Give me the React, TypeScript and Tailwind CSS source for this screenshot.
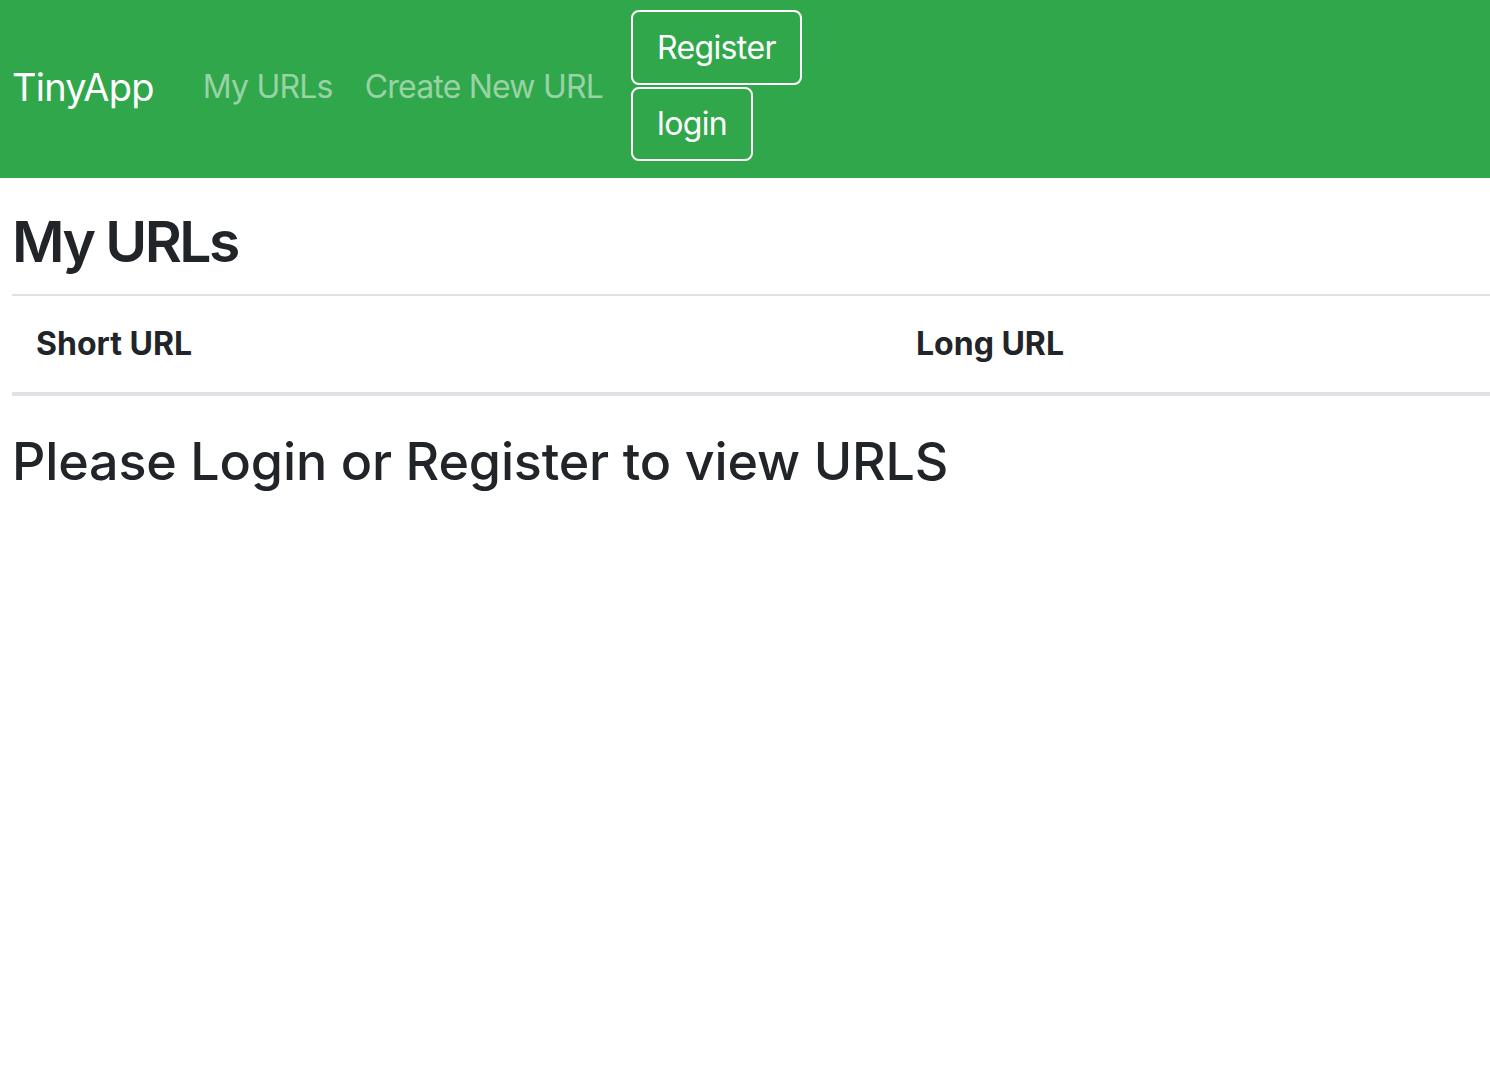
import React from 'react';

const font = { fontFamily: 'Inter, "Noto Sans", sans-serif' };

export default function App() {
  return (
    <div className="min-h-screen bg-white text-[#212529]" style={font}>
      {/* navbar */}
      <nav className="h-[178px] bg-[#31a74c] flex items-center px-[12px]">
        <a className="text-[38px] leading-[1.5] tracking-[-0.02em] text-white mr-[33px] -mt-[4px]">TinyApp</a>
        <div className="flex items-center -mt-[4px]">
          <a className="text-[32px] leading-[1.5] tracking-[-0.025em] text-white/50 px-[16px]">My URLs</a>
          <a className="text-[32px] leading-[1.5] tracking-[-0.025em] text-white/50 px-[16px]">Create New URL</a>
        </div>
        <div className="flex flex-col items-start gap-[2px] ml-[12px] -mt-[7px]">
          <button className="border-2 border-white rounded-[8px] px-[24px] h-[75px] text-[32px] tracking-[-0.02em] text-white">Register</button>
          <button className="border-2 border-white rounded-[8px] px-[24px] h-[74px] text-[32px] tracking-[-0.02em] text-white">login</button>
        </div>
      </nav>

      {/* content */}
      <main className="pl-[12px]">
        <h1 className="text-[57px] font-semibold leading-[1.2] tracking-[-0.045em] mt-[30px] mb-[18px]">My URLs</h1>
        <div className="border-t-2 border-b-4 border-[#dee2e6]">
          <div className="grid grid-cols-[880px_1fr] h-[96px] items-center">
            <div className="px-[24px] text-[32px] font-bold">Short URL</div>
            <div className="px-[24px] text-[32px] font-bold">Long URL</div>
          </div>
        </div>
        <h2 className="text-[52px] font-medium leading-[1.2] tracking-[-0.003em] mt-[35px]">Please Login or Register to view URLS</h2>
      </main>
    </div>
  );
}
